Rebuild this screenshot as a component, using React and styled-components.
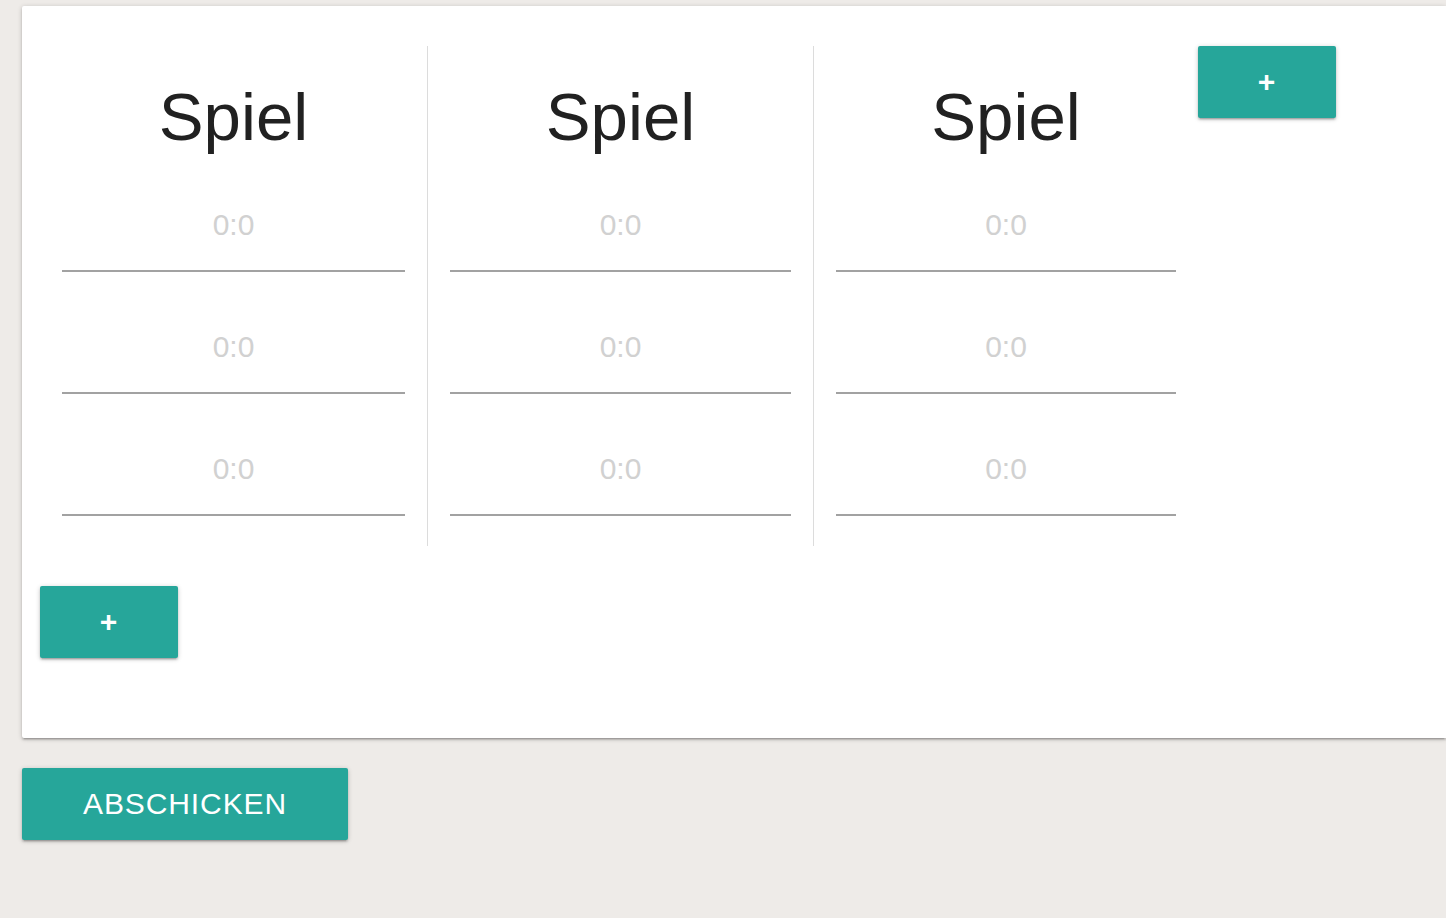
import React from "react";
import styled, { createGlobalStyle } from "styled-components";

const GlobalStyle = createGlobalStyle`
  html, body {
    margin: 0;
    padding: 0;
    background: #eeebe8;
    overflow: hidden;
    font-family: "Liberation Sans", Arial, Helvetica, sans-serif;
  }
`;

const Page = styled.div`
  padding: 6px 0 0 22px;
  min-height: 912px;
`;

const Card = styled.div`
  background: #fff;
  border-radius: 2px 0 0 2px;
  box-shadow: 0 2px 2px 0 rgba(0, 0, 0, 0.14), 0 3px 1px -2px rgba(0, 0, 0, 0.12),
    0 1px 5px 0 rgba(0, 0, 0, 0.2);
  padding: 40px 0 80px 18px;
  box-sizing: border-box;
`;

const Row = styled.div`
  display: flex;
  align-items: flex-start;
`;

const Column = styled.div`
  width: ${(p) => p.width}px;
  box-sizing: border-box;
  padding: 0 22px;
  border-right: ${(p) => (p.last ? "none" : "1px solid #dcdcdc")};
`;

const Title = styled.h1`
  margin: 33.6px 0 26.9px;
  font-size: 67.2px;
  line-height: 110%;
  font-weight: 400;
  color: #212121;
  text-align: center;
`;

const ScoreInput = styled.input`
  display: block;
  width: 100%;
  height: 92px;
  margin: 0 0 30px;
  padding: 0 0 1px;
  box-sizing: border-box;
  border: none;
  border-bottom: 2px solid #a2a2a2;
  outline: none;
  background: transparent;
  font-family: "Liberation Sans", Arial, sans-serif;
  font-size: 30px;
  color: #212121;
  text-align: center;

  &::placeholder {
    color: #d1d1d1;
  }
`;

const Button = styled.button`
  display: inline-flex;
  align-items: center;
  justify-content: center;
  height: 72px;
  padding: 0 ${(p) => p.pad ?? 61}px;
  min-width: ${(p) => p.minWidth || 0}px;
  border: none;
  border-radius: 2px;
  background: #26a69a;
  color: #fff;
  font-family: "Liberation Sans", Arial, sans-serif;
  font-size: 30px;
  font-weight: ${(p) => (p.bold ? 700 : 400)};
  letter-spacing: 0.9px;
  text-transform: uppercase;
  cursor: pointer;
  box-shadow: 0 2px 2px 0 rgba(0, 0, 0, 0.14), 0 3px 1px -2px rgba(0, 0, 0, 0.12),
    0 1px 5px 0 rgba(0, 0, 0, 0.2);
`;

const AddRowWrap = styled.div`
  margin-top: 40px;
`;

const SubmitWrap = styled.div`
  margin-top: 30px;
`;

const columns = [
  { width: 388 },
  { width: 386 },
  { width: 384, last: true },
];

const App = () => {
  return (
    <Page>
      <GlobalStyle />
      <Card>
        <Row>
          {columns.map((c, i) => (
            <Column key={i} width={c.width} last={c.last}>
              <Title>Spiel</Title>
              <ScoreInput placeholder="0:0" />
              <ScoreInput placeholder="0:0" />
              <ScoreInput placeholder="0:0" />
            </Column>
          ))}
          <Button minWidth={138} pad={0} bold>
            +
          </Button>
        </Row>
        <AddRowWrap>
          <Button minWidth={138} pad={0} bold>
            +
          </Button>
        </AddRowWrap>
      </Card>
      <SubmitWrap>
        <Button>Abschicken</Button>
      </SubmitWrap>
    </Page>
  );
};

export default App;
